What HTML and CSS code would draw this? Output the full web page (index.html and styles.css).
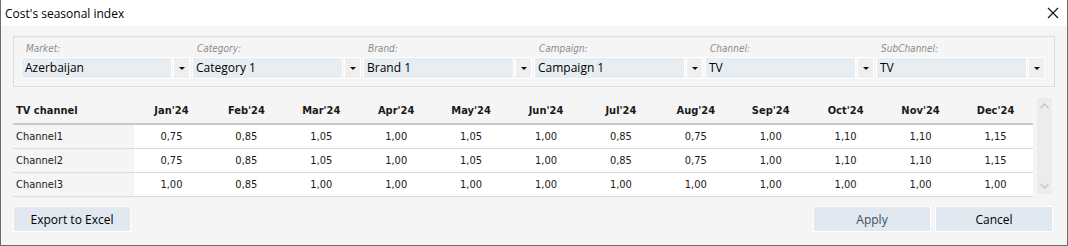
FILE: index.html
```html
<!DOCTYPE html>
<html lang="en">
<head>
    <meta charset="UTF-8">
    <title>Cost's seasonal index</title>
    <link rel="stylesheet" href="styles.css">
</head>
<body>
    <div class="window">
        <!-- Title bar -->
        <div class="titlebar">
            <span class="title">Cost's seasonal index</span>
            <svg class="close" width="12" height="12" viewBox="0 0 12 12">
                <path d="M1 1 L11 11 M11 1 L1 11" stroke="#111" stroke-width="1.1" fill="none"/>
            </svg>
        </div>

        <div class="content">
            <!-- Filters -->
            <div class="filters">
                <div class="field">
                    <div class="label">Market:</div>
                    <div class="combo"><span class="combo-text">Azerbaijan</span><span class="combo-btn"><i class="caret"></i></span></div>
                </div>
                <div class="field">
                    <div class="label">Category:</div>
                    <div class="combo"><span class="combo-text">Category 1</span><span class="combo-btn"><i class="caret"></i></span></div>
                </div>
                <div class="field">
                    <div class="label">Brand:</div>
                    <div class="combo"><span class="combo-text">Brand 1</span><span class="combo-btn"><i class="caret"></i></span></div>
                </div>
                <div class="field">
                    <div class="label">Campaign:</div>
                    <div class="combo"><span class="combo-text">Campaign 1</span><span class="combo-btn"><i class="caret"></i></span></div>
                </div>
                <div class="field">
                    <div class="label">Channel:</div>
                    <div class="combo"><span class="combo-text">TV</span><span class="combo-btn"><i class="caret"></i></span></div>
                </div>
                <div class="field">
                    <div class="label">SubChannel:</div>
                    <div class="combo"><span class="combo-text">TV</span><span class="combo-btn"><i class="caret"></i></span></div>
                </div>
            </div>

            <!-- Grid -->
            <div class="grid-wrap">
                <table class="grid">
                    <thead>
                        <tr>
                            <th class="name">TV channel</th>
                            <th>Jan'24</th><th>Feb'24</th><th>Mar'24</th><th>Apr'24</th>
                            <th>May'24</th><th>Jun'24</th><th>Jul'24</th><th>Aug'24</th>
                            <th>Sep'24</th><th>Oct'24</th><th>Nov'24</th><th>Dec'24</th>
                        </tr>
                    </thead>
                    <tbody>
                        <tr>
                            <td class="name">Channel1</td>
                            <td>0,75</td><td>0,85</td><td>1,05</td><td>1,00</td><td>1,05</td><td>1,00</td>
                            <td>0,85</td><td>0,75</td><td>1,00</td><td>1,10</td><td>1,10</td><td>1,15</td>
                        </tr>
                        <tr>
                            <td class="name">Channel2</td>
                            <td>0,75</td><td>0,85</td><td>1,05</td><td>1,00</td><td>1,05</td><td>1,00</td>
                            <td>0,85</td><td>0,75</td><td>1,00</td><td>1,10</td><td>1,10</td><td>1,15</td>
                        </tr>
                        <tr>
                            <td class="name">Channel3</td>
                            <td>1,00</td><td>0,85</td><td>1,00</td><td>1,00</td><td>1,00</td><td>1,00</td>
                            <td>1,00</td><td>1,00</td><td>1,00</td><td>1,00</td><td>1,00</td><td>1,00</td>
                        </tr>
                    </tbody>
                </table>
                <div class="scrollbar">
                    <svg width="15" height="12" viewBox="0 0 15 12"><path d="M3.5 8 L7.5 4 L11.5 8" stroke="#c4c4c4" stroke-width="1.3" fill="none"/></svg>
                    <svg width="15" height="12" viewBox="0 0 15 12"><path d="M3.5 4 L7.5 8 L11.5 4" stroke="#c4c4c4" stroke-width="1.3" fill="none"/></svg>
                </div>
            </div>

            <!-- Buttons -->
            <div class="actions">
                <button class="btn">Export to Excel</button>
                <div class="right">
                    <button class="btn apply">Apply</button>
                    <button class="btn">Cancel</button>
                </div>
            </div>
        </div>
    </div>
</body>
</html>
```

FILE: styles.css
```css
/* Page */
body {
    margin: 0;
    padding: 0;
    background: #ffffff;
}

/* Dialog window */
.window {
    width: 1068px;
    height: 246px;
    box-sizing: border-box;
    border: 1px solid #6d6d6d;
    border-top: none;
    background: #f5f5f5;
    overflow: hidden;
}

.titlebar {
    height: 26px;
    background: #ffffff;
    display: flex;
    align-items: center;
    justify-content: space-between;
    padding: 0 8px 0 4px;
}

.title {
    font-family: "Open Sans", "Noto Sans", sans-serif;
    font-size: 12px;
    color: #000;
}

.close {
    display: block;
}

.content {
    padding: 10px 12px 0 12px;
}

/* Filter panel */
.filters {
    border: 1px solid #dcdcdc;
    padding: 1px 8px 7px 7px;
    display: flex;
    gap: 2px;
}

.field {
    width: 169px;
}

.label {
    height: 19px;
    line-height: 22px;
    padding-left: 5px;
    font-family: "DejaVu Sans Condensed", "DejaVu Sans", sans-serif;
    font-style: italic;
    font-size: 10px;
    color: #8c8c8c;
}

.combo {
    display: flex;
    height: 22px;
    gap: 1px;
}

.combo-text {
    flex: 1;
    background: #e8edf2;
    border: 1px solid #ffffff;
    padding-left: 3px;
    font-family: "Open Sans", "Noto Sans", sans-serif;
    font-size: 12px;
    line-height: 20px;
    color: #000;
}

.combo-btn {
    width: 15px;
    background: #efefef;
    border: 1px solid #ffffff;
    display: flex;
    align-items: center;
    justify-content: center;
}

.caret {
    width: 0;
    height: 0;
    border-left: 3px solid transparent;
    border-right: 3px solid transparent;
    border-top: 3px solid #111;
}

/* Grid */
.grid-wrap {
    display: flex;
    align-items: flex-start;
    margin-top: 11px;
    gap: 4px;
}

.grid {
    width: 1020px;
    border-collapse: collapse;
    table-layout: fixed;
    font-family: "DejaVu Sans Condensed", "DejaVu Sans", sans-serif;
    font-size: 11px;
    color: #1a1a1a;
}

.grid th {
    height: 25px;
    font-weight: bold;
    text-align: center;
    border-bottom: 2px solid #c8c8c8;
    padding: 0;
}

.grid th.name {
    width: 118px;
    text-align: left;
    padding-left: 3px;
}

.grid td {
    height: 23px;
    background: #ffffff;
    text-align: center;
    border-bottom: 1px solid #dcdcdc;
    padding: 0;
}

.grid td.name {
    background: #f5f5f5;
    text-align: left;
    padding-left: 3px;
}

.scrollbar {
    width: 15px;
    height: 96px;
    background: #ececec;
    display: flex;
    flex-direction: column;
    justify-content: space-between;
    padding: 2px 0;
    box-sizing: border-box;
}

.scrollbar svg {
    display: block;
}

/* Buttons */
.actions {
    margin-top: 9px;
    display: flex;
    justify-content: space-between;
    padding-right: 2px;
}

.right {
    display: flex;
    gap: 4px;
}

.btn {
    width: 118px;
    height: 26px;
    background: #e1e8f0;
    border: 1px solid #ffffff;
    font-family: "Open Sans", "Noto Sans", sans-serif;
    font-size: 12px;
    color: #000;
    padding: 0;
    cursor: pointer;
}

.btn.apply {
    color: #3a4e64;
}
```
